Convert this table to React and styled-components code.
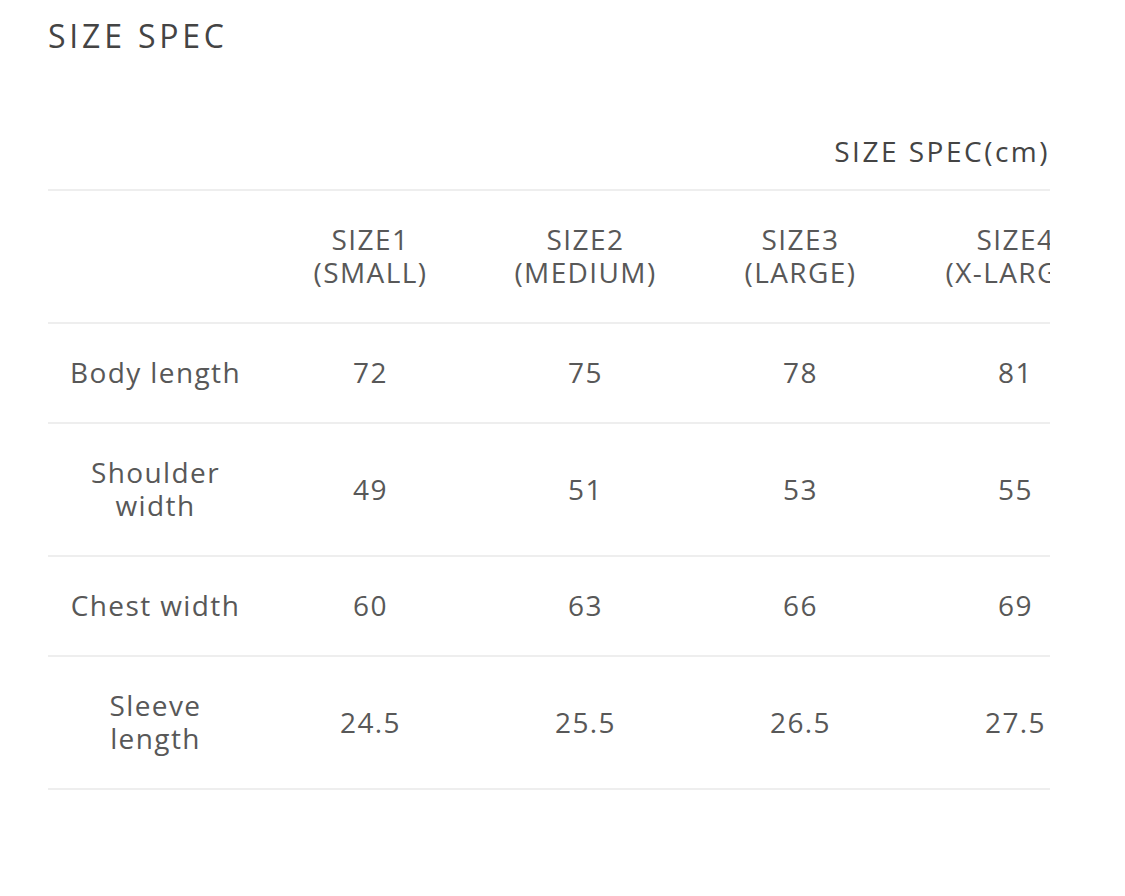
import React from "react";
import styled, { createGlobalStyle } from "styled-components";

const Global = createGlobalStyle`
  html, body { margin: 0; padding: 0; background: #fff; }
  body { font-family: "Open Sans", "Noto Sans", sans-serif; color: #555; }
`;

const Page = styled.div`
  padding: 16px 75px 40px 48px;
  display: flex;
  flex-direction: column;
`;

const Title = styled.h2`
  margin: 0;
  font-size: 32px;
  line-height: 40px;
  font-weight: 400;
  letter-spacing: 3.8px;
  color: #444;
`;

const Caption = styled.div`
  margin-top: 79px;
  margin-bottom: 21px;
  text-align: right;
  font-size: 28px;
  line-height: 33px;
  letter-spacing: 2.5px;
  color: #444;
`;

const Scroller = styled.div`
  width: 1002px;
  overflow: hidden;
`;

const Table = styled.table`
  width: 1075px;
  table-layout: fixed;
  border-collapse: collapse;
  font-size: 28px;
  line-height: 33px;
  letter-spacing: 1.4px;
  color: #585858;
`;

const Cell = styled.td`
  box-sizing: border-box;
  width: 215px;
  padding: 32px 20px 33px;
  text-align: center;
  vertical-align: middle;
  border-top: 2px solid #eee;
  white-space: ${(p) => (p.$nowrap ? "nowrap" : "normal")};
`;

const Row = styled.tr`
  &:last-child td { border-bottom: 2px solid #eee; }
`;

const sizes = [
  ["SIZE1", "(SMALL)"],
  ["SIZE2", "(MEDIUM)"],
  ["SIZE3", "(LARGE)"],
  ["SIZE4", "(X-LARGE)"],
];

const rows = [
  ["Body length", "72", "75", "78", "81"],
  ["Shoulder width", "49", "51", "53", "55"],
  ["Chest width", "60", "63", "66", "69"],
  ["Sleeve length", "24.5", "25.5", "26.5", "27.5"],
];

export default function App() {
  return (
    <>
      <Global />
      <Page>
        <Title>SIZE SPEC</Title>
        <Caption>SIZE SPEC(cm)</Caption>
        <Scroller>
          <Table>
            <tbody>
              <Row>
                <Cell />
                {sizes.map(([a, b]) => (
                  <Cell key={a} $nowrap>
                    {a}
                    <br />
                    {b}
                  </Cell>
                ))}
              </Row>
              {rows.map((r) => (
                <Row key={r[0]}>
                  {r.map((v, i) => (
                    <Cell key={i}>{v}</Cell>
                  ))}
                </Row>
              ))}
            </tbody>
          </Table>
        </Scroller>
      </Page>
    </>
  );
}
